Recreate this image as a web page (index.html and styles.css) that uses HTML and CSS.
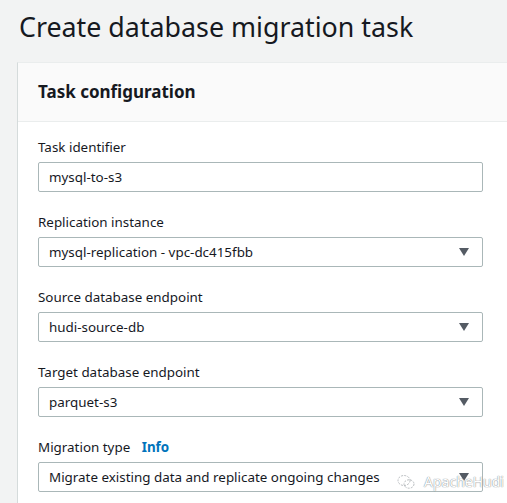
FILE: index.html
```html
<!DOCTYPE html>
<html>
<head>
<meta charset="utf-8">
<link rel="stylesheet" href="styles.css">
</head>
<body>
<h1 class="title">Create database migration task</h1>
<section class="panel">
  <header class="panel-head"><h2>Task configuration</h2></header>
  <div class="panel-body">
    <div class="field">
      <label class="label">Task identifier</label>
      <div class="input">mysql-to-s3</div>
    </div>
    <div class="field">
      <label class="label">Replication instance</label>
      <div class="input select">mysql-replication - vpc-dc415fbb<span class="caret"></span></div>
    </div>
    <div class="field">
      <label class="label">Source database endpoint</label>
      <div class="input select">hudi-source-db<span class="caret"></span></div>
    </div>
    <div class="field">
      <label class="label">Target database endpoint</label>
      <div class="input select">parquet-s3<span class="caret"></span></div>
    </div>
    <div class="field">
      <label class="label">Migration type <a class="info">Info</a></label>
      <div class="input select">Migrate existing data and replicate ongoing changes<span class="caret"></span></div>
    </div>
  </div>
</section>
<div class="watermark">
  <svg width="18" height="16" viewBox="0 0 18 16"><g fill="none" stroke="#b8bcbf" stroke-width="1" stroke-dasharray="2 1.2"><ellipse cx="7" cy="6.5" rx="6" ry="5"/><ellipse cx="12" cy="10" rx="5" ry="4.2"/></g></svg>
  <span>ApacheHudi</span>
</div>
</body>
</html>
```
FILE: styles.css
```css
html, body {
  margin: 0;
  padding: 0;
}
body {
  background: #f2f3f3;
  font-family: "Noto Sans", "Open Sans", sans-serif;
  color: #16191f;
  width: 507px;
  height: 503px;
  overflow: hidden;
  position: relative;
}
.title {
  margin: 0;
  padding: 8px 0 0 19px;
  font-size: 26.8px;
  font-weight: 400;
  line-height: 38px;
  height: 55px;
  box-sizing: border-box;
}
.panel {
  margin: 7px 0 0 17px;
  background: #fff;
  border-left: 1px solid #d5dbdb;
  border-top: 1px solid #eaeded;
  height: 460px;
}
.panel-head {
  background: #fafafa;
  height: 58px;
  border-bottom: 1px solid #eaeded;
  padding-left: 20px;
  display: flex;
  align-items: center;
}
.panel-head h2 {
  margin: 0;
  font-size: 17px;
  font-weight: 700;
  line-height: 24px;
}
.panel-body {
  padding: 15px 0 0 20px;
  display: flex;
  flex-direction: column;
  gap: 20px;
}
.field {
  display: flex;
  flex-direction: column;
  gap: 5px;
}
.label {
  font-size: 13.4px;
  line-height: 20px;
}
.info {
  color: #0073bb;
  font-weight: 700;
  margin-left: 8px;
}
.input {
  width: 445px;
  height: 30px;
  box-sizing: border-box;
  border: 1px solid #aab7b8;
  border-radius: 2px;
  padding: 0 10px;
  font-size: 13.4px;
  line-height: 28px;
  background: #fff;
  display: flex;
  align-items: center;
  justify-content: space-between;
}
.caret {
  width: 0;
  height: 0;
  border-left: 5px solid transparent;
  border-right: 5px solid transparent;
  border-top: 8px solid #545b64;
  margin-right: 3px;
}
.watermark {
  position: absolute;
  left: 397px;
  top: 472px;
  display: flex;
  align-items: center;
  gap: 9px;
  font-size: 14px;
  color: #fff;
  text-shadow: 0 0 1px #8a9096, 0 0 1px #8a9096;
}
```
